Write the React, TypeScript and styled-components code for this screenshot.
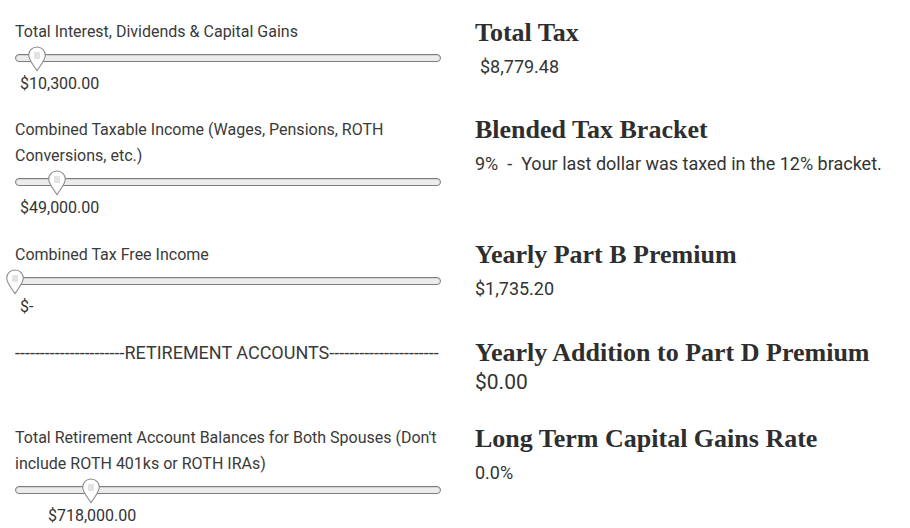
import React from 'react';
import styled, { createGlobalStyle } from 'styled-components';

const GlobalStyle = createGlobalStyle`
  body {
    margin: 0;
    background: #ffffff;
    color: #333333;
    font-family: Roboto, "Liberation Sans", sans-serif;
  }
`;

const Page = styled.div`
  display: flex;
  width: 910px;
  height: 528px;
  overflow: hidden;
`;

const InputsColumn = styled.div`
  display: flex;
  flex-direction: column;
  width: 426px;
  padding: 19px 0 0 15px;
  box-sizing: content-box;
`;

const ResultsColumn = styled.div`
  display: flex;
  flex-direction: column;
  margin-left: 34px;
  padding-top: 16px;
`;

const Group = styled.div<{ $gap: number }>`
  display: flex;
  flex-direction: column;
  margin-bottom: ${(p) => p.$gap}px;
`;

const Label = styled.div`
  font-size: 16px;
  line-height: 26px;
  color: #3a3a3a;
  white-space: nowrap;
`;

const Divider = styled.div`
  font-size: 18px;
  line-height: 26px;
  color: #3a3a3a;
  white-space: nowrap;
`;

const SliderRow = styled.div`
  position: relative;
  height: 26px;
  display: flex;
  align-items: center;
`;

const Track = styled.div`
  width: 100%;
  height: 8px;
  box-sizing: border-box;
  border: 1px solid #7d7d7d;
  border-radius: 4px;
  background: #ececec;
  box-shadow: inset 0 1px 0 #d4d4d4;
`;

const Thumb = styled.svg`
  position: absolute;
  top: 1px;
  width: 19px;
  height: 26px;
  transform: translateX(-50%);
`;

const Amount = styled.div<{ $indent: number }>`
  font-size: 16px;
  line-height: 26px;
  color: #333333;
  padding-left: ${(p) => p.$indent}px;
`;

const Result = styled.div<{ $gap: number }>`
  display: flex;
  flex-direction: column;
  margin-bottom: ${(p) => p.$gap}px;
`;

const Heading = styled.h2`
  margin: 0;
  font-family: "Liberation Serif", "DejaVu Serif", serif;
  font-weight: 700;
  font-size: 26px;
  line-height: 34px;
  color: #2e2e2e;
`;

const ResultValue = styled.div<{ $large?: boolean; $indent?: number }>`
  font-size: ${(p) => (p.$large ? 21 : 18)}px;
  line-height: ${(p) => (p.$large ? 24 : 34)}px;
  padding-left: ${(p) => p.$indent ?? 0}px;
  color: #333333;
  white-space: pre;
`;

const ThumbIcon = ({ pct }: { pct: number }) => (
  <Thumb viewBox="0 0 19 26" style={{ left: `${pct}%` }}>
    <path
      d="M9.5 1 C4.8 1 1.2 4.6 1.2 9.2 C1.2 13.6 5.2 18.2 9.5 24.6 C13.8 18.2 17.8 13.6 17.8 9.2 C17.8 4.6 14.2 1 9.5 1 Z"
      fill="#ffffff"
      stroke="#8a8a8a"
      strokeWidth="1.1"
    />
    <path d="M7.5 6 V13 M9.5 6 V13 M11.5 6 V13" stroke="#b0b0b0" strokeWidth="0.7" />
  </Thumb>
);

type SliderProps = {
  label: React.ReactNode;
  pct: number;
  amount: string;
  indent: number;
  gap: number;
};

const SliderField = ({ label, pct, amount, indent, gap }: SliderProps) => (
  <Group $gap={gap}>
    <Label>{label}</Label>
    <SliderRow>
      <Track />
      <ThumbIcon pct={pct} />
    </SliderRow>
    <Amount $indent={indent}>{amount}</Amount>
  </Group>
);

const dashes = '-'.repeat(22);

export default function App() {
  return (
    <Page>
      <GlobalStyle />
      <InputsColumn>
        <SliderField
          label="Total Interest, Dividends & Capital Gains"
          pct={5.2}
          amount="$10,300.00"
          indent={5}
          gap={20}
        />
        <SliderField
          label={
            <>
              Combined Taxable Income (Wages, Pensions, ROTH
              <br />
              Conversions, etc.)
            </>
          }
          pct={9.9}
          amount="$49,000.00"
          indent={5}
          gap={21}
        />
        <SliderField label="Combined Tax Free Income" pct={0} amount="$-" indent={5} gap={20} />
        <Group $gap={59}>
          <Divider>
            {dashes}RETIREMENT ACCOUNTS{dashes}
          </Divider>
        </Group>
        <SliderField
          label={
            <>
              Total Retirement Account Balances for Both Spouses (Don't
              <br />
              include ROTH 401ks or ROTH IRAs)
            </>
          }
          pct={17.8}
          amount="$718,000.00"
          indent={33}
          gap={0}
        />
      </InputsColumn>
      <ResultsColumn>
        <Result $gap={29}>
          <Heading>Total Tax</Heading>
          <ResultValue $indent={5}>$8,779.48</ResultValue>
        </Result>
        <Result $gap={57}>
          <Heading>Blended Tax Bracket</Heading>
          <ResultValue>{'9%  -  Your last dollar was taxed in the 12% bracket.'}</ResultValue>
        </Result>
        <Result $gap={30}>
          <Heading>Yearly Part B Premium</Heading>
          <ResultValue>$1,735.20</ResultValue>
        </Result>
        <Result $gap={28}>
          <Heading>Yearly Addition to Part D Premium</Heading>
          <ResultValue $large>$0.00</ResultValue>
        </Result>
        <Result $gap={0}>
          <Heading>Long Term Capital Gains Rate</Heading>
          <ResultValue>0.0%</ResultValue>
        </Result>
      </ResultsColumn>
    </Page>
  );
}
